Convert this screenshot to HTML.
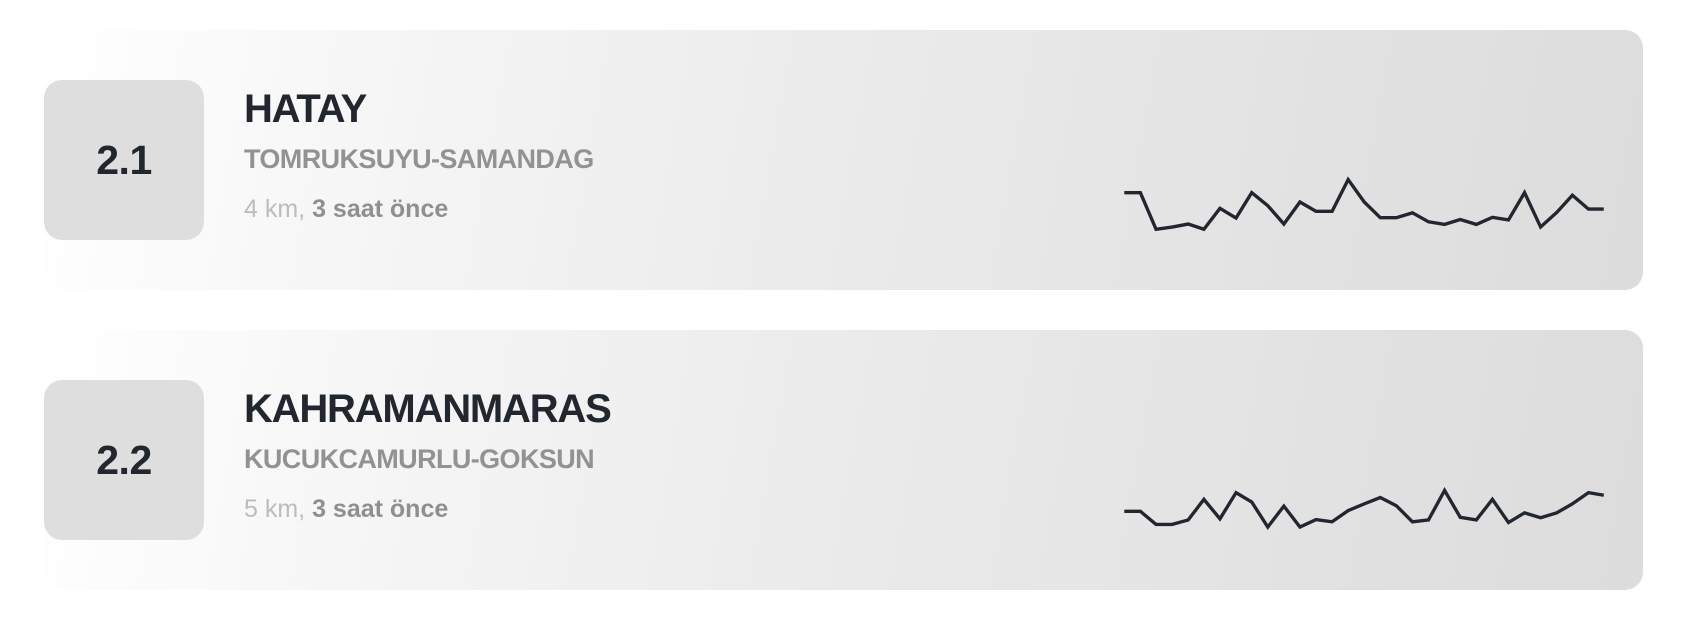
<!DOCTYPE html>
<html><head><meta charset="utf-8"><style>
body{margin:0;width:1686px;height:622px;background:#fff;position:relative;overflow:hidden;font-family:"Liberation Sans",Arial,sans-serif}
.card{position:absolute;left:44px;width:1599px;height:260px;border-radius:18px;background:linear-gradient(100deg,#fff 0%,#f4f4f4 25%,#e9e9e9 55%,#dcdcdc 100%)}
.badge{position:absolute;left:0;top:50px;width:160px;height:160px;border-radius:18px;background:#dedede;display:flex;align-items:center;justify-content:center;font-weight:bold;font-size:41px;color:#22262e;letter-spacing:-0.5px}
.t{position:absolute;left:200px;font-weight:bold;white-space:nowrap}
.h{top:57px;font-size:40px;color:#22262e;letter-spacing:-1.2px}
.s{top:114px;font-size:27px;color:#929292;letter-spacing:-0.6px}
.m{top:165px;font-size:25px;color:#bcbcbc;font-weight:normal}
.m b{color:#8f8f8f}
svg{position:absolute;left:1100px;width:586px;height:150px}
</style></head><body>
<div class="card" style="top:30px"><div class="badge">2.1</div>
<div class="t h">HATAY</div><div class="t s">TOMRUKSUYU-SAMANDAG</div><div class="t m">4 km, <b>3 saat önce</b></div></div>
<div class="card" style="top:330px"><div class="badge">2.2</div>
<div class="t h">KAHRAMANMARAS</div><div class="t s">KUCUKCAMURLU-GOKSUN</div><div class="t m">5 km, <b>3 saat önce</b></div></div>
<svg style="top:144px" viewBox="0 0 1568 401"><polyline fill="none" stroke="#22262e" stroke-width="9" points="65,130 108,130 150,228 193,222 236,214 278,228 321,172 364,198 406,130 449,165 492,214 535,155 578,180 621,180 664,95 707,155 750,197 793,197 836,184 879,208 922,215 964,202 1007,215 1050,196 1093,203 1136,130 1179,222 1222,183 1264,137 1307,174 1348,174"/></svg>
<svg style="top:444px" viewBox="0 0 1568 401"><polyline fill="none" stroke="#22262e" stroke-width="9" points="65,180 108,180 150,215 193,215 236,203 278,148 321,200 364,130 406,155 449,222 492,166 535,222 578,202 621,208 664,178 707,160 750,143 793,165 836,208 879,203 922,124 964,196 1007,203 1050,148 1093,210 1136,184 1179,197 1222,184 1264,160 1307,130 1348,137"/></svg>
</body></html>
